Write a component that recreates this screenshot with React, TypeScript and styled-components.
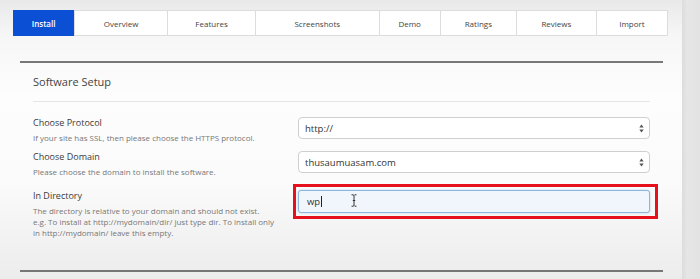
import styled, { createGlobalStyle } from "styled-components";

const GlobalStyle = createGlobalStyle`
  html, body {
    margin: 0;
    padding: 0;
  }
  body {
    font-family: "Open Sans", "Liberation Sans", sans-serif;
    color: #333;
  }
`;

const TABS = [
  { label: "Install", width: 62, active: true },
  { label: "Overview", width: 93 },
  { label: "Features", width: 88 },
  { label: "Screenshots", width: 124 },
  { label: "Demo", width: 61 },
  { label: "Ratings", width: 76 },
  { label: "Reviews", width: 80 },
  { label: "Import", width: 71 },
];

const Screen = styled.div`
  display: flex;
  width: 700px;
  height: 279px;
  overflow: hidden;
  background: linear-gradient(
    180deg,
    #e9e9e9 0%,
    #f6f6f6 12%,
    #fdfdfd 35%,
    #fbfbfb 65%,
    #ececec 100%
  );
`;

const Main = styled.div`
  flex: 1;
  padding: 10px 0 0 13px;
`;

const Scrollbar = styled.div`
  width: 18px;
  background: linear-gradient(90deg, #dcdcdc 0%, #e6e6e6 30%, #e3e3e3 100%);
`;

const TabBar = styled.div`
  display: flex;
  width: 655px;
  height: 26px;
  box-sizing: border-box;
  border: 1px solid #dcdcdc;
  background: #fff;
`;

const Tab = styled.div<{ $width: number; $active?: boolean }>`
  width: ${(p) => p.$width}px;
  display: flex;
  align-items: center;
  justify-content: center;
  font-size: 8px;
  font-weight: ${(p) => (p.$active ? 600 : 400)};
  color: ${(p) => (p.$active ? "#fff" : "#444")};
  background: ${(p) => (p.$active ? "#0a4fd4" : "#fff")};
  margin-top: ${(p) => (p.$active ? "-1px" : "0")};
  margin-bottom: ${(p) => (p.$active ? "-1px" : "0")};
  margin-left: ${(p) => (p.$active ? "-1px" : "0")};
  & + & {
    border-left: 1px solid #dcdcdc;
  }
`;

const Panel = styled.section`
  width: 643px;
  margin: 25px 0 0 7px;
  border-top: 2px solid #777;
  border-bottom: 2px solid #777;
  padding: 11px 13px 32px;
  box-sizing: border-box;
`;

const Title = styled.h2`
  margin: 0;
  font-size: 11px;
  line-height: 16px;
  font-weight: 400;
  color: #444;
  padding-bottom: 11px;
  border-bottom: 1px solid #e6e6e6;
`;

const Form = styled.div`
  display: flex;
  flex-direction: column;
  gap: 7px;
  margin-top: 14px;
`;

const Row = styled.div<{ $spaced?: boolean }>`
  display: grid;
  grid-template-columns: 250px 352px;
  column-gap: 15px;
  align-items: start;
  margin-top: ${(p) => (p.$spaced ? "5px" : "0")};
`;

const Label = styled.div`
  font-size: 9px;
  line-height: 13px;
  color: #3a3a3a;
`;

const Hint = styled.div`
  margin-top: 3px;
  font-size: 8px;
  line-height: 11px;
  color: #777;
  white-space: nowrap;
`;

const Control = styled.div`
  position: relative;
  margin-top: 1px;
`;

const SelectBox = styled.div`
  height: 22px;
  box-sizing: border-box;
  border: 1px solid #cfcfcf;
  border-radius: 4px;
  background: #fff;
  display: flex;
  align-items: center;
  justify-content: space-between;
  padding: 0 5px 0 6px;
  font-size: 9.5px;
  color: #333;
`;

const TextBox = styled.div`
  height: 23px;
  box-sizing: border-box;
  border: 1px solid #8db5df;
  border-radius: 3px;
  background: #f1f6fc;
  box-shadow: 0 0 2px rgba(90, 140, 210, 0.45);
  display: flex;
  align-items: center;
  padding: 0 8px;
  font-size: 9.5px;
  color: #333;
`;

const Caret = styled.span`
  display: inline-block;
  width: 1px;
  height: 11px;
  margin-left: 0.5px;
  background: #222;
`;

const Highlight = styled.div`
  position: absolute;
  top: -6px;
  left: -5px;
  right: -8px;
  bottom: -6px;
  border: 3px solid #e5101b;
  pointer-events: none;
`;

const Pointer = styled.svg`
  position: absolute;
  left: 53px;
  top: 4px;
`;

function Arrows() {
  return (
    <svg width="5" height="9" viewBox="0 0 5 9">
      <path d="M2.5 0.5 L4.7 3.5 H0.3 Z" fill="#555" />
      <path d="M2.5 8.5 L4.7 5.5 H0.3 Z" fill="#555" />
    </svg>
  );
}

export default function App() {
  return (
    <>
      <GlobalStyle />
      <Screen>
        <Main>
          <TabBar>
            {TABS.map((t) => (
              <Tab key={t.label} $width={t.width} $active={t.active}>
                {t.label}
              </Tab>
            ))}
          </TabBar>
          <Panel>
            <Title>Software Setup</Title>
            <Form>
              <Row>
                <div>
                  <Label>Choose Protocol</Label>
                  <Hint>If your site has SSL, then please choose the HTTPS protocol.</Hint>
                </div>
                <Control>
                  <SelectBox>
                    <span>http://</span>
                    <Arrows />
                  </SelectBox>
                </Control>
              </Row>
              <Row>
                <div>
                  <Label>Choose Domain</Label>
                  <Hint>Please choose the domain to install the software.</Hint>
                </div>
                <Control>
                  <SelectBox>
                    <span>thusaumuasam.com</span>
                    <Arrows />
                  </SelectBox>
                </Control>
              </Row>
              <Row $spaced>
                <div>
                  <Label>In Directory</Label>
                  <Hint>
                    The directory is relative to your domain and should not exist.
                    <br />
                    e.g. To install at http://mydomain/dir/ just type dir. To install only
                    <br />
                    in http://mydomain/ leave this empty.
                  </Hint>
                </div>
                <Control>
                  <TextBox>
                    wp
                    <Caret />
                  </TextBox>
                  <Pointer width="6" height="13" viewBox="0 0 6 13">
                    <path
                      d="M0.5 0.8 H2.2 L3 1.6 L3.8 0.8 H5.5 M3 1.6 V11.4 M0.5 12.2 H2.2 L3 11.4 L3.8 12.2 H5.5 M1.8 6.5 H4.2"
                      fill="none"
                      stroke="#222"
                      strokeWidth="0.9"
                    />
                  </Pointer>
                  <Highlight />
                </Control>
              </Row>
            </Form>
          </Panel>
        </Main>
        <Scrollbar />
      </Screen>
    </>
  );
}
